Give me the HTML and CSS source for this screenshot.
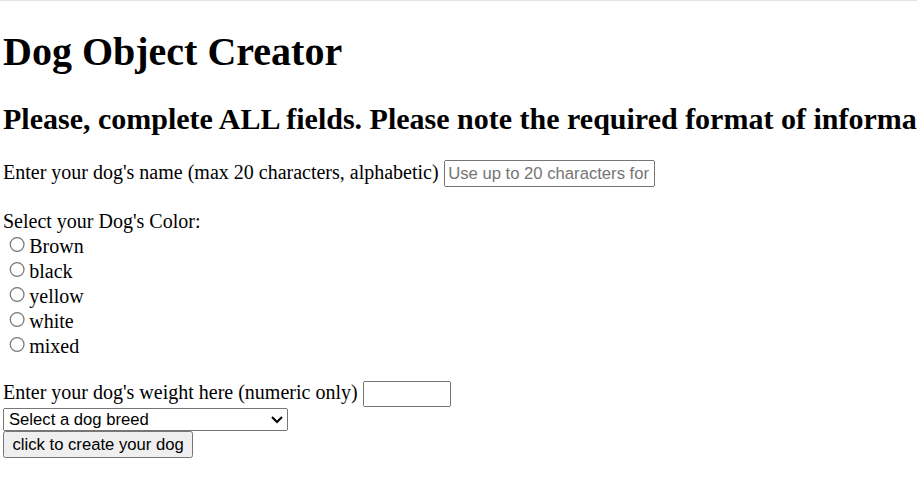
FILE: index.html
```html
<!DOCTYPE html>
<html lang="en">
<head>
<meta charset="utf-8">
<title>Dog Object Creator</title>
<link rel="stylesheet" href="styles.css">
</head>
<body>
<div class="topline"></div>
<main class="page">
  <h1 class="title">Dog Object Creator</h1>
  <h2 class="subtitle">Please, complete ALL fields. Please note the required format of information for each field.</h2>
  <form class="dog-form">
    <label class="field">Enter your dog's name (max 20 characters, alphabetic) <input class="text-input name-input" type="text" placeholder="Use up to 20 characters for your dog's name"></label>
    <br><br>
    Select your Dog's Color:<br>
    <input class="radio" type="radio" name="color" value="brown">Brown<br>
    <input class="radio" type="radio" name="color" value="black">black<br>
    <input class="radio" type="radio" name="color" value="yellow">yellow<br>
    <input class="radio" type="radio" name="color" value="white">white<br>
    <input class="radio" type="radio" name="color" value="mixed">mixed<br>
    <br>
    <label class="field">Enter your dog's weight here (numeric only) <input class="text-input weight-input" type="text"></label><br>
    <select class="breed-select">
      <option>Select a dog breed</option>
    </select><br>
    <button class="create-btn" type="button">click to create your dog</button>
  </form>
</main>
</body>
</html>
```
FILE: styles.css
```css
html {
  background: #ffffff;
}
body {
  margin: 0;
  overflow: hidden;
  font-family: "Liberation Serif", "Times New Roman", serif;
  color: #000;
}
.topline {
  height: 1px;
  background: #e3e3e3;
}
.page {
  zoom: 1.25;
  padding: 0 2.4px;
  white-space: nowrap;
}
.title {
  font-size: 2em;
  margin: 0.67em 0;
}
.subtitle {
  font-size: 1.5em;
  margin: 0.83em 0;
}
.dog-form {
  font-size: 16px;
}
.text-input,
.breed-select,
.create-btn {
  font-family: "Liberation Sans", Arial, sans-serif;
  font-size: 13.333px;
}
.name-input {
  width: 168.8px;
  box-sizing: border-box;
}
.weight-input {
  width: 70.4px;
  box-sizing: border-box;
}
.breed-select {
  width: 228px;
}
```
